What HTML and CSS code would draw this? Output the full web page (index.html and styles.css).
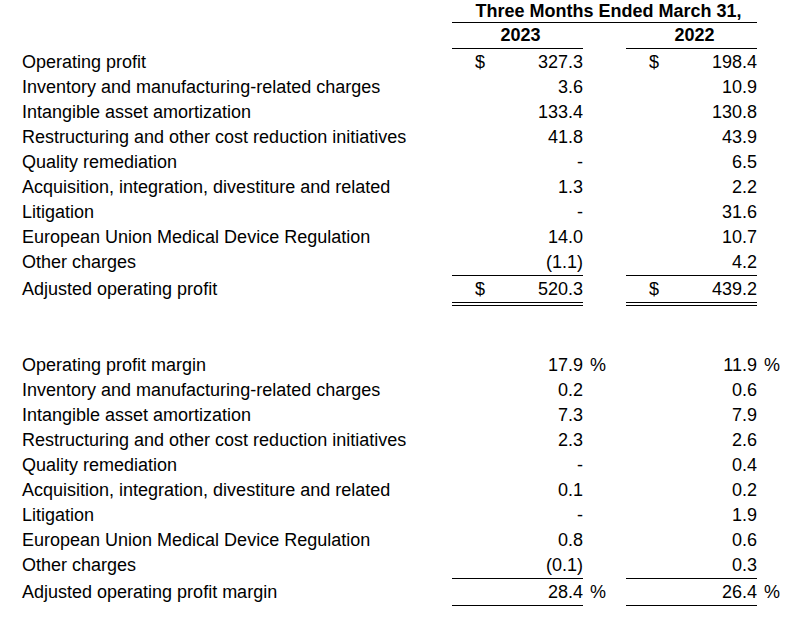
FILE: index.html
```html
<!DOCTYPE html>
<html>
<head>
<meta charset="utf-8">
<link rel="stylesheet" href="styles.css">
</head>
<body>
<div class="sheet">
  <div class="row head1">
    <div></div>
    <div class="period">Three Months Ended March 31,</div>
  </div>
  <div class="row head2">
    <div></div>
    <div class="year">2023</div>
    <div></div>
    <div class="year">2022</div>
  </div>

  <div class="section first">
    <div class="row"><div class="label">Operating profit</div><div class="num"><span class="cur">$</span><span>327.3</span></div><div></div><div class="num"><span class="cur">$</span><span>198.4</span></div></div>
    <div class="row"><div class="label">Inventory and manufacturing-related charges</div><div class="num"><span>3.6</span></div><div></div><div class="num"><span>10.9</span></div></div>
    <div class="row"><div class="label">Intangible asset amortization</div><div class="num"><span>133.4</span></div><div></div><div class="num"><span>130.8</span></div></div>
    <div class="row"><div class="label">Restructuring and other cost reduction initiatives</div><div class="num"><span>41.8</span></div><div></div><div class="num"><span>43.9</span></div></div>
    <div class="row"><div class="label">Quality remediation</div><div class="num"><span>-</span></div><div></div><div class="num"><span>6.5</span></div></div>
    <div class="row"><div class="label">Acquisition, integration, divestiture and related</div><div class="num"><span>1.3</span></div><div></div><div class="num"><span>2.2</span></div></div>
    <div class="row"><div class="label">Litigation</div><div class="num"><span>-</span></div><div></div><div class="num"><span>31.6</span></div></div>
    <div class="row"><div class="label">European Union Medical Device Regulation</div><div class="num"><span>14.0</span></div><div></div><div class="num"><span>10.7</span></div></div>
    <div class="row"><div class="label">Other charges</div><div class="num under"><span>(1.1)</span></div><div></div><div class="num under"><span>4.2</span></div></div>
    <div class="row total"><div class="label">Adjusted operating profit</div><div class="num dbl"><span class="cur">$</span><span>520.3</span></div><div></div><div class="num dbl"><span class="cur">$</span><span>439.2</span></div></div>
  </div>

  <div class="section second">
    <div class="row"><div class="label">Operating profit margin</div><div class="num"><span>17.9</span></div><div class="pct">%</div><div class="num"><span>11.9</span></div><div class="pct">%</div></div>
    <div class="row"><div class="label">Inventory and manufacturing-related charges</div><div class="num"><span>0.2</span></div><div></div><div class="num"><span>0.6</span></div></div>
    <div class="row"><div class="label">Intangible asset amortization</div><div class="num"><span>7.3</span></div><div></div><div class="num"><span>7.9</span></div></div>
    <div class="row"><div class="label">Restructuring and other cost reduction initiatives</div><div class="num"><span>2.3</span></div><div></div><div class="num"><span>2.6</span></div></div>
    <div class="row"><div class="label">Quality remediation</div><div class="num"><span>-</span></div><div></div><div class="num"><span>0.4</span></div></div>
    <div class="row"><div class="label">Acquisition, integration, divestiture and related</div><div class="num"><span>0.1</span></div><div></div><div class="num"><span>0.2</span></div></div>
    <div class="row"><div class="label">Litigation</div><div class="num"><span>-</span></div><div></div><div class="num"><span>1.9</span></div></div>
    <div class="row"><div class="label">European Union Medical Device Regulation</div><div class="num"><span>0.8</span></div><div></div><div class="num"><span>0.6</span></div></div>
    <div class="row"><div class="label">Other charges</div><div class="num under"><span>(0.1)</span></div><div></div><div class="num under"><span>0.3</span></div></div>
    <div class="row total"><div class="label">Adjusted operating profit margin</div><div class="num dbl"><span>28.4</span></div><div class="pct">%</div><div class="num dbl"><span>26.4</span></div><div class="pct">%</div></div>
  </div>
</div>
</body>
</html>
```

FILE: styles.css
```css
html, body {
  margin: 0;
  padding: 0;
  background: #ffffff;
}

body {
  font-family: "Liberation Sans", Arial, sans-serif;
  font-size: 18px;
  color: #000000;
}

.sheet {
  width: 803px;
}

.row {
  display: grid;
  grid-template-columns: 452px 131px 43px 131px 46px;
  height: 25px;
  align-items: stretch;
  line-height: 25px;
}

.label {
  padding-left: 22px;
  white-space: nowrap;
}

.head1 {
  height: 23px;
  line-height: 22px;
}

.period {
  grid-column: 2 / 5;
  text-align: center;
  font-weight: bold;
  padding-left: 8px;
  border-bottom: 1px solid #000;
}

.head2 {
  height: 26px;
  line-height: 24px;
}

.year {
  text-align: center;
  font-weight: bold;
  padding-left: 6px;
  border-bottom: 1px solid #000;
}

.num {
  display: flex;
  justify-content: flex-end;
  box-sizing: border-box;
  white-space: nowrap;
}

.num .cur {
  margin-right: auto;
  padding-left: 23px;
}

.under {
  border-bottom: 1px solid #000;
}

.total {
  height: 29px;
}

.total .label,
.total .num,
.total .pct {
  padding-top: 2px;
}

.dbl {
  border-bottom: 4px double #000;
}

.pct {
  padding-left: 7px;
}

.first {
  margin-top: 1px;
}

.second {
  margin-top: 49px;
}
```
